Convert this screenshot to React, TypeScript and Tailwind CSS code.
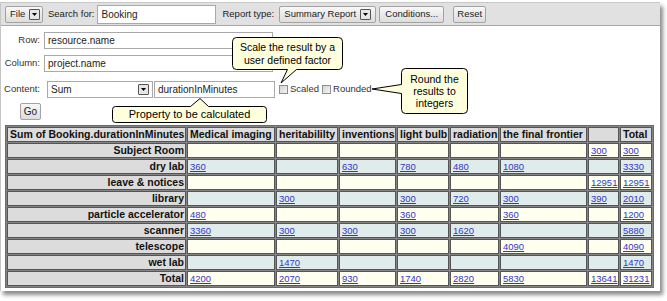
import React from 'react';

const cols = ['Medical imaging', 'heritabililty', 'inventions', 'light bulb', 'radiation', 'the final frontier', '', 'Total'];
const colWidths = ['w-[88px]', 'w-[62px]', 'w-[57px]', 'w-[52px]', 'w-[49px]', 'w-[87px]', 'w-[31px]', 'w-[32px]'];

const rows = [
  { name: 'Subject Room', cells: ['', '', '', '', '', '', '300', '300'] },
  { name: 'dry lab', cells: ['360', '', '630', '780', '480', '1080', '', '3330'] },
  { name: 'leave & notices', cells: ['', '', '', '', '', '', '12951', '12951'] },
  { name: 'library', cells: ['', '300', '', '300', '720', '300', '390', '2010'] },
  { name: 'particle accelerator', cells: ['480', '', '', '360', '', '360', '', '1200'] },
  { name: 'scanner', cells: ['3360', '300', '300', '300', '1620', '', '', '5880'] },
  { name: 'telescope', cells: ['', '', '', '', '', '4090', '', '4090'] },
  { name: 'wet lab', cells: ['', '1470', '', '', '', '', '', '1470'] },
  { name: 'Total', cells: ['4200', '2070', '930', '1740', '2820', '5830', '13641', '31231'] },
];

function DropArrow() {
  return (
    <span className="inline-flex items-center justify-center w-[11px] h-[11px] border border-[#555] bg-[#e6e6e6] rounded-[1px]">
      <svg width="5" height="3" viewBox="0 0 5 3"><path d="M0 0h5L2.5 3z" fill="#000" /></svg>
    </span>
  );
}

function Btn({ className = '', children }: { className?: string; children: React.ReactNode }) {
  return (
    <div className={`h-[17px] flex items-center justify-center gap-[4px] border border-[#a3a3a3] rounded-[2px] bg-gradient-to-b from-[#f8f8f8] to-[#dddddd] text-[9.5px] text-[#222] ${className}`}>
      {children}
    </div>
  );
}

function Field({ className = '', children }: { className?: string; children?: React.ReactNode }) {
  return (
    <div className={`h-[17px] flex items-center pl-[3px] border border-[#a9a9a9] bg-white text-[10px] text-[#222] ${className}`}>
      {children}
    </div>
  );
}

function Check() {
  return <span className="block w-[9px] h-[9px] border border-[#8e8e8e] bg-gradient-to-br from-[#d4d4d4] to-[#f4f4f4]" />;
}

export default function App() {
  return (
    <div className="w-[667px] h-[301px] bg-white relative overflow-hidden font-['Liberation_Sans',Arial,sans-serif]">
      <div className="mt-[2px] w-[660px] h-[289px] bg-white border-l border-[#c6c6c6] shadow-[3px_4px_4px_rgba(0,0,0,0.45)]">
        {/* toolbar */}
        <div className="h-[24px] bg-[#e1e1e1] border-t border-[#c8c8c8] border-b border-b-[#a8a8a8] flex items-center pl-[4px] text-[9.5px] text-[#222]">
          <Btn className="w-[38px] justify-start pl-[4px]">File <DropArrow /></Btn>
          <span className="ml-[5px]">Search for:</span>
          <Field className="ml-[3px] w-[119px] h-[19px]">Booking</Field>
          <span className="ml-[6px]">Report type:</span>
          <Btn className="ml-[5px] w-[97px]">Summary Report <DropArrow /></Btn>
          <Btn className="ml-[3px] w-[65px]">Conditions...</Btn>
          <Btn className="ml-[9px] w-[33px]">Reset</Btn>
        </div>

        {/* form */}
        <div className="text-[9.5px] text-[#333]">
          <div className="mt-[6px] flex items-center">
            <span className="w-[39px] text-right">Row:</span>
            <Field className="ml-[4px] w-[229px]">resource.name</Field>
          </div>
          <div className="mt-[6px] flex items-center">
            <span className="w-[39px] text-right">Column:</span>
            <Field className="ml-[4px] w-[229px]">project.name</Field>
          </div>
          <div className="mt-[9px] flex items-center">
            <span className="w-[39px] text-right">Content:</span>
            <Field className="ml-[7px] w-[106px] justify-between pr-[3px]">Sum <DropArrow /></Field>
            <Field className="ml-[1px] w-[121px]">durationInMinutes</Field>
            <span className="ml-[4px]"><Check /></span>
            <span className="ml-[2px] text-[#333]">Scaled</span>
            <span className="ml-[3px]"><Check /></span>
            <span className="ml-[2px] text-[#333]">Rounded</span>
          </div>
          <div className="mt-[5px] ml-[19px]">
            <Btn className="w-[21px] text-[10px]">Go</Btn>
          </div>
        </div>

        {/* result table */}
        <table className="mt-[5px] ml-[4px] table-fixed w-[649px] border-separate border-spacing-[1px] border border-[#6a6a6a] bg-[#858585] text-[#111]">
          <thead>
            <tr>
              <th className="w-[179px] h-[15px] p-0 pl-[2px] border border-[#555] bg-[#dcdcdc] text-left text-[10.5px] font-bold leading-[13px] whitespace-nowrap overflow-hidden">
                Sum of Booking.durationInMinutes
              </th>
              {cols.map((c, i) => (
                <th key={i} className={`${colWidths[i]} h-[15px] p-0 pl-[2px] border border-[#555] bg-[#dcdcdc] text-left text-[10.5px] font-bold leading-[13px] whitespace-nowrap overflow-hidden`}>
                  {c}
                </th>
              ))}
            </tr>
          </thead>
          <tbody>
            {rows.map((r, ri) => {
              const bg = ri % 2 === 0 ? 'bg-[#fffff0]' : 'bg-[#dfeceb]';
              return (
                <tr key={r.name}>
                  <th className="h-[15px] p-0 pr-[1px] border border-[#555] bg-[#dcdcdc] text-right text-[10.5px] font-bold leading-[13px] whitespace-nowrap">
                    {r.name}
                  </th>
                  {r.cells.map((v, ci) => (
                    <td key={ci} className={`h-[15px] p-0 pl-[2px] border border-[#555] ${bg} text-[9.5px] leading-[13px] whitespace-nowrap overflow-hidden`}>
                      {v && <a className="text-[#3636c2] underline">{v}</a>}
                    </td>
                  ))}
                </tr>
              );
            })}
          </tbody>
        </table>
      </div>

      {/* callouts */}
      <svg className="absolute left-[231px] top-[36px]" width="114" height="50">
        <path d="M5.5 1.5H107.5Q111.5 1.5 111.5 5.5V29.5Q111.5 33.5 107.5 33.5H65.5L50 47L56.5 33.5H5.5Q1.5 33.5 1.5 29.5V5.5Q1.5 1.5 5.5 1.5Z" fill="#ffffde" stroke="#000" />
      </svg>
      <div className="absolute left-[232px] top-[37px] w-[111px] h-[33px] flex flex-col items-center justify-center text-[10.5px] leading-[13px] text-black">
        <span>Scale the result by a</span>
        <span>user defined factor</span>
      </div>

      <svg className="absolute left-[370px] top-[67px]" width="100" height="50">
        <path d="M35.5 1.5H93.5Q97.5 1.5 97.5 5.5V42.5Q97.5 46.5 93.5 46.5H35.5Q31.5 46.5 31.5 42.5V26.5L2 22L31.5 17.5V5.5Q31.5 1.5 35.5 1.5Z" fill="#ffffde" stroke="#000" />
      </svg>
      <div className="absolute left-[401px] top-[68px] w-[67px] h-[46px] flex flex-col items-center justify-center text-[10.5px] leading-[12px] text-black">
        <span>Round the</span>
        <span>results to</span>
        <span>integers</span>
      </div>

      <svg className="absolute left-[111px] top-[97px]" width="157" height="27">
        <path d="M4.5 9.5H79.5L89 1.5L97.5 9.5H152.5Q155.5 9.5 155.5 12.5V22.5Q155.5 25.5 152.5 25.5H4.5Q1.5 25.5 1.5 22.5V12.5Q1.5 9.5 4.5 9.5Z" fill="#ffffde" stroke="#000" />
      </svg>
      <div className="absolute left-[112px] top-[106px] w-[155px] h-[17px] flex items-center justify-center text-[11px] text-black">
        Property to be calculated
      </div>
    </div>
  );
}
